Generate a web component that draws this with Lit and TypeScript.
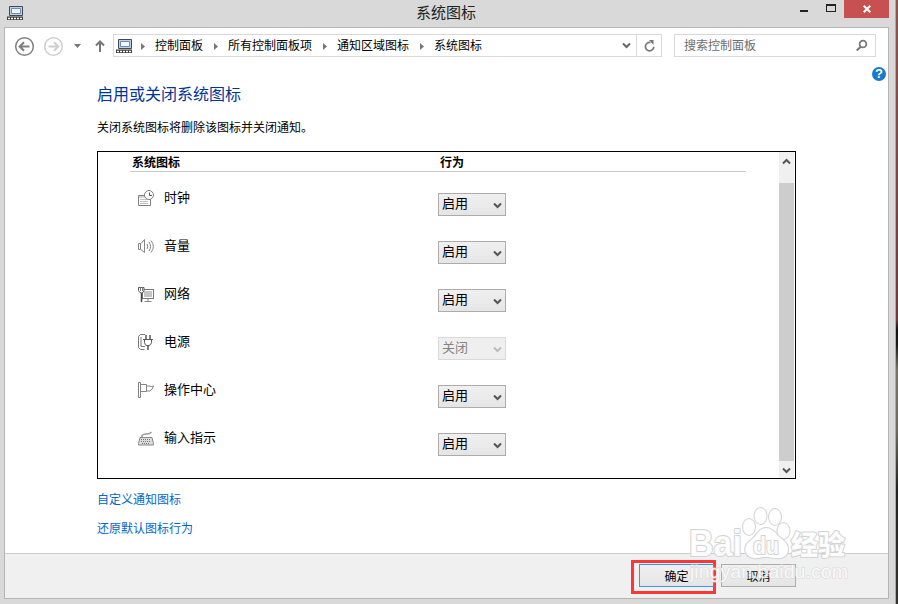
import { LitElement, html, css, svg } from "lit";
import { customElement, property } from "lit/decorators.js";

const icons: Record<string, unknown> = {
  clock: svg`<g fill="none" stroke="#808080"><path d="M.5 5.500h12v10H.5z"/><path d="M1 7h11" stroke="#aaa"/><path d="M2.500 9.500h8M2.500 11.500h8M2.500 13.500h8" stroke-dasharray="1 1"/><circle cx="11" cy="5" r="4.500" fill="#fff"/><path d="M11.500 2.500v3h2.500" stroke="#555"/></g>`,
  volume: svg`<g fill="none" stroke="#858585"><path d="M.5 5.500h2v6h-2zM3 5.500 6.500 1.500v13L3 11.500M9 6q1.500 2.500 0 5M11 4q3.200 4.500 0 9M13 2.500q4.800 6 0 12"/></g>`,
  network: svg`<rect x="4.500" y="3.500" width="11" height="9" fill="#fff" stroke="#777"/><path d="M6 5h8v6H6z" fill="#c4c4c4"/><path d="M6.500 15.500h7M10 13v2" stroke="#888"/><path d="M3.500 7v9" stroke="#444" stroke-width="1.500"/><path d="M.5 1.500h5.500v3q-.5 2.500-2.500 2.500T.5 4.500z" fill="#fff" stroke="#555"/><path d="M2.500 1v4M4.500 1v4" stroke="#777"/>`,
  power: svg`<path d="M7 .5H2.500l-2 2v11l2 2H6.500M3 3v9.500h4" fill="none" stroke="#777"/><path d="M6.500 5.500v3q.5 3 2.500 3h2q2-.5 2.500-3v-3" fill="#fff" stroke="#555"/><path d="M5 5.500h10" stroke="#555"/><path d="M8 1v4M12 1v4M10 12v4" stroke="#555" stroke-width="1.500"/>`,
  flag: svg`<path d="M.5.500h2v15h-2zM2.500 2.500h6v7h-6M8.500 4h2.500q2 1 4.500 0-1 4-4 5H8.500" fill="none" stroke="#858585"/>`,
  keyboard: svg`<path d="M2 7.500h12l1.500 6v1.500H.5v-1.500z" fill="#ddd" stroke="#888"/><path d="M3 9.500h10M3 11.500h10M4 13.500h8" stroke="#777" stroke-dasharray="1 1"/><path d="M4 7V5.500q2-2 4.500-1.500t5-2" fill="none" stroke="#999" stroke-width="1.500"/>`,
};

const computer = svg`<path d="M2.500.500h13v9h-13z" fill="#b8d2ea" stroke="#414956"/><path d="M4.500 2.500h9v5h-9z" fill="#f4f7fa" stroke="#6c8db1"/><path d="M0 10.500h16v3.500H0z" fill="#3d3d40"/><path d="M1 12.500h14" stroke="#fff" stroke-width="1.500" stroke-dasharray="2 1"/>`;

const chevron = svg`<path d="M1 1.500 4.500 5 8 1.500" fill="none" stroke="currentColor" stroke-width="2"/>`;

@customElement("state-select")
class StateSelect extends LitElement {
  @property() value = "";
  @property({ type: Boolean, reflect: true }) disabled = false;
  static styles = css`
    :host { display: flex; box-sizing: border-box; width: 68px; height: 23px; border: 1px solid #acacac; background: linear-gradient(#f0f0f0, #e5e5e5); align-items: center; justify-content: space-between; padding: 0 3px; font-size: 13px; line-height: 19px; color: #000; }
    :host([disabled]) { border-color: #d9d9d9; background: #efefef; color: #838383; }
    .text { padding-bottom: 3px; line-height: 18px; }
    svg { width: 9px; height: 7px; color: #555; margin-top: 1px; }
    :host([disabled]) svg { color: #bcbcbc; }
  `;
  render() {
    return html`<span class="text">${this.value}</span><svg viewBox="0 0 9 7">${chevron}</svg>`;
  }
}

@customElement("app-root")
class AppRoot extends LitElement {
  rows = [
    ["clock", "时钟", "启用"],
    ["volume", "音量", "启用"],
    ["network", "网络", "启用"],
    ["power", "电源", "关闭"],
    ["flag", "操作中心", "启用"],
    ["keyboard", "输入指示", "启用"],
  ];
  path = ["控制面板", "所有控制面板项", "通知区域图标", "系统图标"];

  static styles = css`
    :host { display: block; position: relative; width: 898px; height: 604px; overflow: hidden; font-family: "Noto Sans CJK SC", sans-serif; font-size: 12px; line-height: 18px; color: #000; background: linear-gradient(#8d5552, #6d3a3c 320px, #111 330px, #1b1b18 345px, #77756a 370px, #6d6b60 430px, #222 490px, #35332e); }
    * { box-sizing: border-box; }
    svg { display: block; flex: none; overflow: visible; }
    .window { width: 896px; height: 604px; background: #d9d9d9; border-right: 1px solid #aaa; padding-left: 4px; }
    .title { height: 27px; display: grid; grid-template-columns: 1fr auto 1fr; align-items: start; width: 885px; }
    .title h1 { margin: 1px 1px 0 0; font-size: 15px; line-height: 22px; font-weight: 400; color: #222; }
    .title .app { margin: 6px 0 0 3px; }
    .controls { display: flex; justify-content: flex-end; }
    .min { width: 8px; height: 2px; background: #222; margin: 10px 18px 0 0; }
    .max { width: 10px; height: 8px; border: 1px solid #222; border-top-width: 2px; margin: 4px 8px 0 0; }
    .close { width: 45px; height: 18px; background: #c75050; display: flex; align-items: center; justify-content: center; }
    .client { width: 885px; height: 572px; border: 1px solid #b5b5b5; background: #fff; display: flex; flex-direction: column; }
    .nav { display: flex; align-items: center; height: 23px; margin: 6px 12px 0 9px; flex: none; }
    .nav .fwd { margin-left: 9px; }
    .nav .drop { margin-left: 11px; }
    .nav .up { margin: 1px 8px 0 14px; }
    .address { width: 549px; height: 23px; border: 1px solid #d9d9d9; display: flex; align-items: center; padding-left: 2px; }
    .address .pc { margin-right: 9px; }
    .crumb { display: flex; align-items: center; margin-right: 11px; padding-bottom: 1px; }
    .crumb svg { margin: 2px 10px 0 0; }
    .expand { margin-left: auto; color: #666; }
    .refresh { width: 25px; height: 21px; border-left: 1px solid #d9d9d9; margin-left: 5px; display: flex; align-items: center; justify-content: center; }
    .search { width: 202px; height: 23px; border: 1px solid #d9d9d9; margin-left: 12px; display: flex; align-items: center; justify-content: space-between; padding: 0 8px 0 9px; color: #6d6d6d; }
    .search span { padding-bottom: 1px; }
    .help { width: 14px; height: 14px; border-radius: 50%; background: #1979ca; color: #fff; margin: 10px 2px 0 auto; font: bold 13px/14px "Liberation Sans", sans-serif; text-align: center; flex: none; }
    .main { padding-left: 92px; flex: 1; }
    .main h2 { margin: 0; font-size: 16px; font-weight: 400; line-height: 24px; color: #003399; }
    .main p { margin: 13px 0 15px; line-height: 18px; }
    .list { width: 699px; height: 328px; border: 1px solid #000; display: flex; justify-content: space-between; }
    .table { width: 616px; margin-left: 32px; }
    .head { height: 20px; border-bottom: 1px solid #ccc; display: grid; grid-template-columns: 308px 1fr; padding-left: 2px; font-weight: 700; line-height: 20px; }
    .head span { height: 19px; }
    .row { height: 48px; display: flex; padding-left: 8px; font-size: 13px; }
    .row .ico { margin: 18px 10px 0 0; }
    .row .name { width: 274px; line-height: 20px; padding-top: 15px; }
    .row state-select { margin-top: 21px; }
    .scroll { width: 16px; height: 326px; padding-right: 1px; display: flex; flex-direction: column; align-items: center; background: linear-gradient(90deg, #f0f0f0 15px, #fff 15px); color: #555; }
    .scroll .thumb { width: 15px; height: 278px; background: #cdcdcd; }
    .scroll .btn { height: 31px; padding-top: 6px; }
    .scroll .btn.down { height: 17px; }
    .link { display: block; width: max-content; color: #0066cc; line-height: 18px; margin-top: 11px; }
    .foot { height: 45px; background: #f0f0f0; border-top: 1px solid #ccc; display: flex; padding: 6px 92px 0 0; justify-content: flex-end; flex: none; }
    .mark { width: 85px; height: 34px; border: 3px solid #fc3737; padding: 1px 0 0 5px; }
    .btn2 { width: 75px; height: 23px; border: 1px solid #acacac; background: linear-gradient(#f0f0f0, #e5e5e5); text-align: center; line-height: 21px; }
    .btn2.ok { border-color: #3399ff; }
    .btn2.cancel { margin: 4px 0 0 5px; }
    .logo { position: absolute; left: 680px; top: 500px; width: 180px; height: 90px; }
    .logo .o { fill: #fff; fill-opacity: .9; stroke: #d4d4d4; stroke-width: 2; stroke-linejoin: round; paint-order: stroke; }
    .bai { font: bold 36px "Liberation Sans", sans-serif; }
    .du { font: bold 23px "Liberation Sans", sans-serif; }
    .jy { font: 900 27px "Noto Sans CJK SC", sans-serif; }
    .url { font: 17.5px "Liberation Sans", sans-serif; fill: #fff; fill-opacity: .8; stroke: #d4d4d4; stroke-opacity: .6; stroke-width: 1.500px; paint-order: stroke; }
  `;

  render() {
    return html`
      <div class="window">
        <header class="title">
          <svg class="app" width="16" height="14">${computer}</svg>
          <h1>系统图标</h1>
          <div class="controls">
            <div class="min"></div><div class="max"></div>
            <div class="close"><svg width="8" height="8"><path d="M.7.700 7.300 7.300M7.300.700.7 7.300" stroke="#fff" stroke-width="2"/></svg></div>
          </div>
        </header>
        <section class="client">
          <nav class="nav">
            <svg width="20" height="20" fill="none" stroke="#808080"><circle cx="10.500" cy="10.500" r="8.800" stroke-width="1.500"/><path d="M15.500 10.500H6M10 6.200 5.700 10.500l4.300 4.300" stroke-width="2.200"/></svg>
            <svg class="fwd" width="20" height="20" fill="none" stroke="#cfcfcf"><circle cx="10.500" cy="10.500" r="8.800" stroke-width="1.500"/><path d="M5.500 10.500H15M11 6.200l4.300 4.300-4.300 4.300" stroke-width="2"/></svg>
            <svg class="drop" width="7" height="4"><path d="M0 0h7L3.500 4z" fill="#777"/></svg>
            <svg class="up" width="10" height="12"><path d="M5 12V2M1 5.500l4-4 4 4" fill="none" stroke="#777" stroke-width="2"/></svg>
            <div class="address">
              <svg class="pc" width="16" height="14">${computer}</svg>
              ${this.path.map((p) => html`<span class="crumb"><svg width="4" height="7"><path d="M0 0v7l4-3.500z" fill="#777"/></svg>${p}</span>`)}
              <svg class="expand" width="9" height="7">${chevron}</svg>
              <div class="refresh"><svg width="11" height="12"><path d="M6.500 2.500a4.200 4.200 0 1 0 3.300 4.200" fill="none" stroke="#777" stroke-width="1.700"/><path d="M5 0h4.500v5z" fill="#777"/></svg></div>
            </div>
            <div class="search"><span>搜索控制面板</span><svg width="11" height="11" fill="none" stroke="#777"><circle cx="7" cy="4" r="3.400" stroke-width="1.700"/><path d="M5 6.500.7 10.500" stroke-width="2"/></svg></div>
          </nav>
          <div class="help">?</div>
          <main class="main">
            <h2>启用或关闭系统图标</h2>
            <p>关闭系统图标将删除该图标并关闭通知。</p>
            <div class="list">
              <div class="table">
                <div class="head"><span>系统图标</span><span>行为</span></div>
                ${this.rows.map(([icon, name, state]) => html`<div class="row">
                  <svg class="ico" width="16" height="16">${icons[icon]}</svg><span class="name">${name}</span>
                  <state-select .value=${state} ?disabled=${state === "关闭"}></state-select>
                </div>`)}
              </div>
              <div class="scroll">
                <div class="btn"><svg width="9" height="7"><path d="M1 5.500 4.500 2 8 5.500" fill="none" stroke="currentColor" stroke-width="2"/></svg></div>
                <div class="thumb"></div>
                <div class="btn down"><svg width="9" height="7">${chevron}</svg></div>
              </div>
            </div>
            <a class="link">自定义通知图标</a>
            <a class="link">还原默认图标行为</a>
          </main>
          <footer class="foot">
            <div class="mark"><div class="btn2 ok">确定</div></div>
            <div class="btn2 cancel">取消</div>
          </footer>
        </section>
      </div>
      <svg class="logo" viewBox="680 500 180 90">
        <text class="o bai" x="689" y="556" textLength="53" lengthAdjust="spacingAndGlyphs">Bai</text>
        <g class="o"><ellipse cx="749" cy="527" rx="6" ry="8"/><ellipse cx="760.500" cy="516" rx="6" ry="8"/><ellipse cx="775" cy="517" rx="6" ry="8"/><ellipse cx="783.500" cy="531" rx="6" ry="8"/>
        <path d="M766 528c-8 0-9 8-15 12-8 5-8 16 2 18 5 1 8-1 13-1s9 2 15 1c9-2 9-13 2-18-6-4-9-12-17-12z"/></g>
        <text class="o du" x="753" y="554" textLength="26" lengthAdjust="spacingAndGlyphs">du</text>
        <text class="o jy" x="791" y="555">经验</text>
        <text class="url" x="690" y="578" textLength="158" lengthAdjust="spacingAndGlyphs">jingyan.baidu.com</text>
      </svg>
    `;
  }
}
